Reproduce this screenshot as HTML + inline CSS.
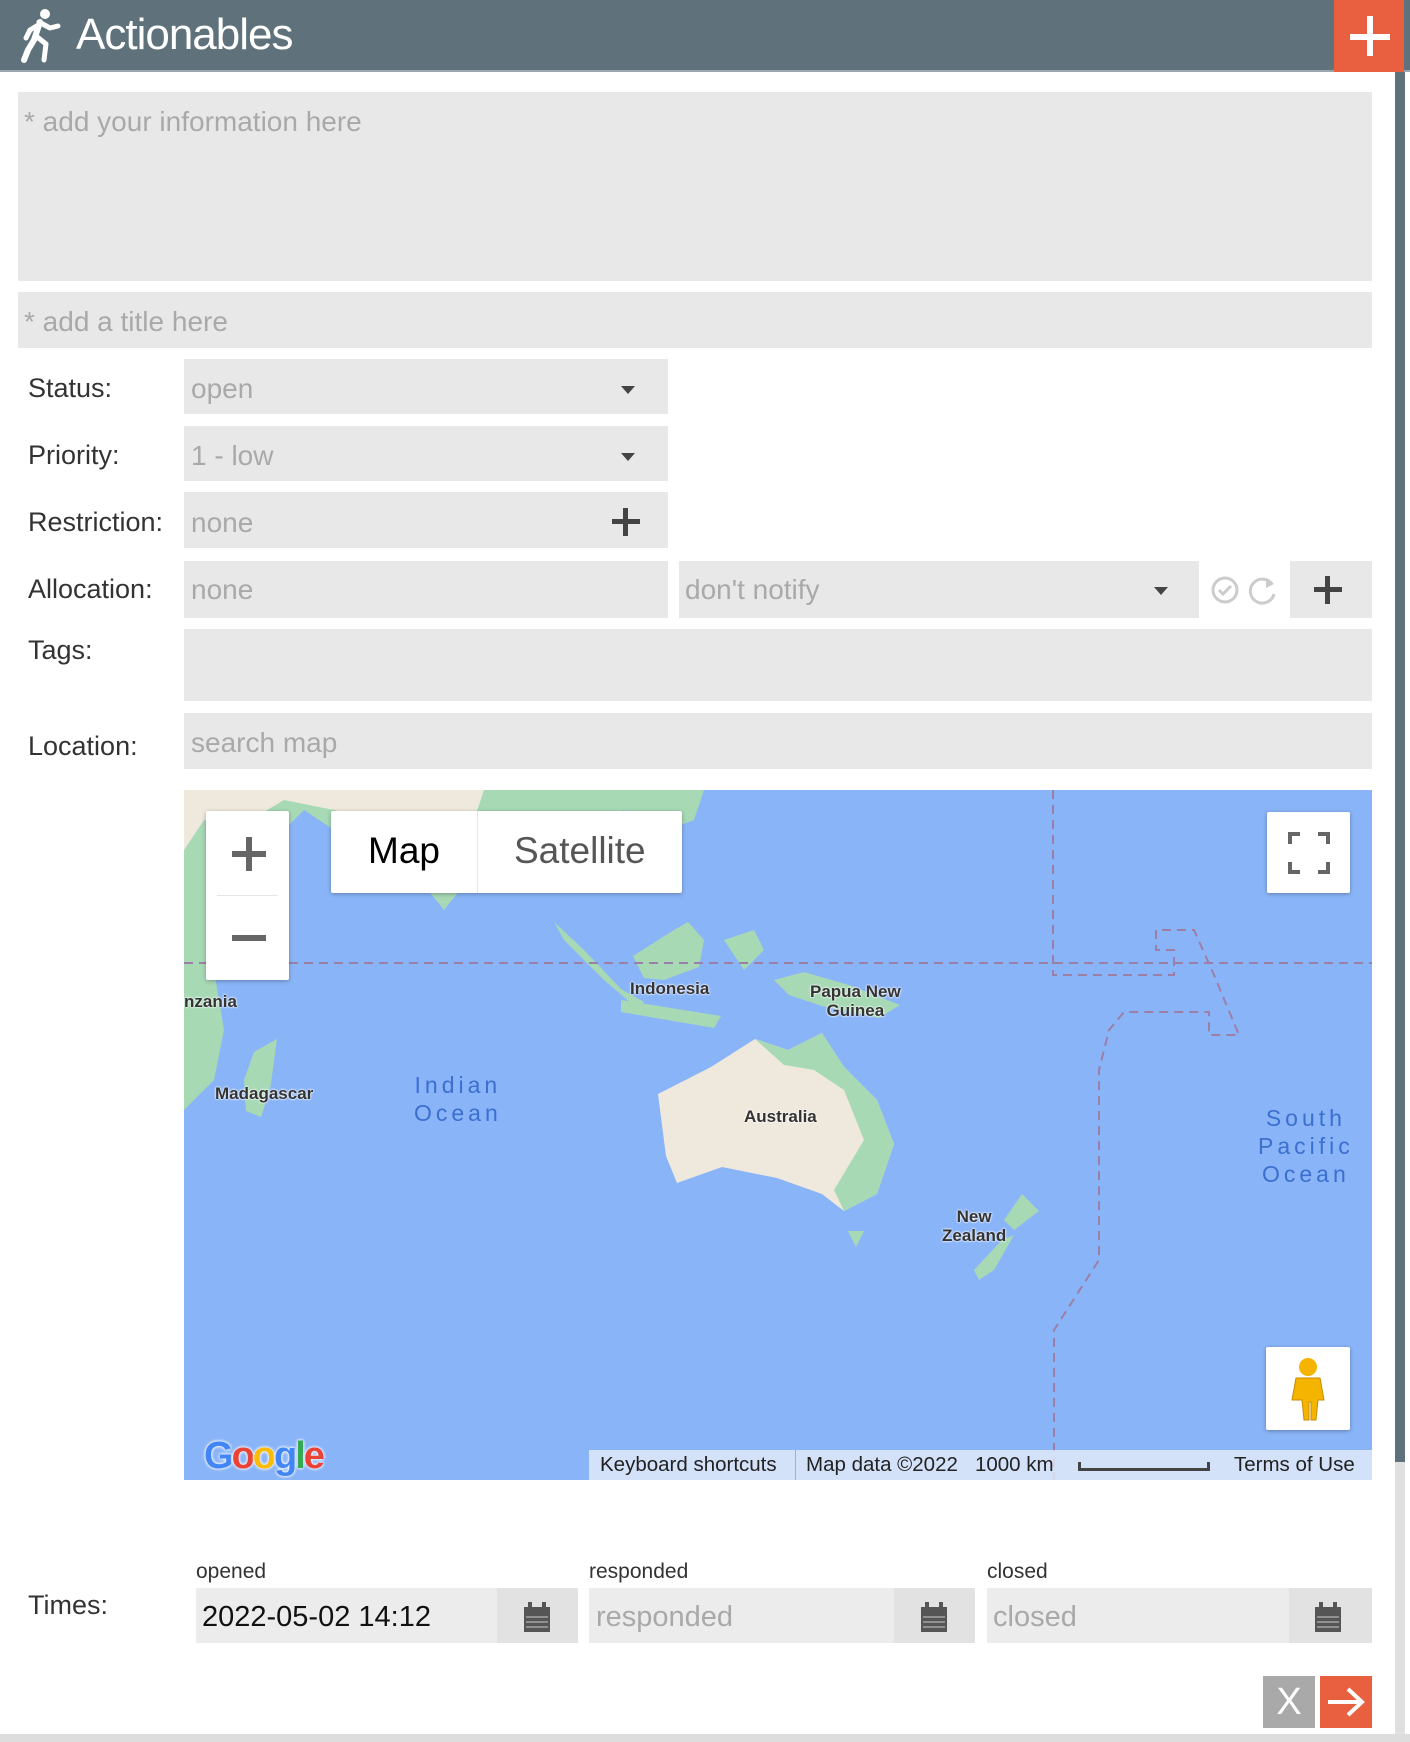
<!DOCTYPE html>
<html><head><meta charset="utf-8"><style>
*{box-sizing:border-box;margin:0;padding:0}
body{width:1410px;height:1742px;background:#fff;font-family:"Liberation Sans",Arial,sans-serif;position:relative;overflow:hidden}
.a{position:absolute}
.hdr{left:0;top:0;width:1410px;height:72px;background:#5f727b;border-bottom:2px solid #9aa6ad}
.f{background:#e8e8e8}
.ph{color:#a9a9a9;font-size:28px}
.lb{color:#333;font-size:27px;left:28px}
.arr{width:0;height:0;border-left:7px solid transparent;border-right:7px solid transparent;border-top:8px solid #444}
.ml{font-size:17px;font-weight:bold;color:#333;text-shadow:0 0 2px #fff,0 0 2px #fff;position:absolute;text-align:center;line-height:19px}
.oc{position:absolute;color:#3b6fd0;font-size:23px;letter-spacing:4px;line-height:28px;text-align:center}
</style></head><body>
<div class="a hdr"></div>
<svg class="a" style="left:20px;top:8px" width="46" height="56" viewBox="0 0 46 56"><g fill="#fff" stroke="#fff" stroke-linecap="round" stroke-linejoin="round"><circle cx="25" cy="6" r="5" stroke="none"/><path d="M20 14 L14 32 L8 42 L4 52" stroke-width="6" fill="none"/><path d="M19 14 L30 20 L38 18 M16 28 L26 36 L24 52 M20 16 L10 22 L6 30" stroke-width="5" fill="none"/></g></svg>
<div class="a" style="left:76px;top:10px;font-size:44px;color:#fff;letter-spacing:-1px">Actionables</div>
<div class="a" style="left:1334px;top:0;width:70px;height:72px;background:#e8603f"></div>
<div class="a" style="left:1350px;top:34px;width:40px;height:6px;background:#fff"></div>
<div class="a" style="left:1367px;top:16px;width:6px;height:40px;background:#fff"></div>
<div class="a" style="left:1395px;top:72px;width:10px;height:1390px;background:#5f727b"></div>
<div class="a" style="left:1395px;top:1462px;width:10px;height:272px;background:#e0e0e0"></div>
<div class="a" style="left:0;top:1734px;width:1410px;height:8px;background:#ddd"></div>

<div class="a f" style="left:18px;top:92px;width:1354px;height:189px"></div>
<div class="a ph" style="left:24px;top:106px">* add your information here</div>
<div class="a f" style="left:18px;top:292px;width:1354px;height:56px"></div>
<div class="a ph" style="left:24px;top:306px">* add a title here</div>

<div class="a lb" style="top:373px">Status:</div>
<div class="a f" style="left:184px;top:359px;width:484px;height:55px"></div>
<div class="a ph" style="left:191px;top:373px">open</div>
<div class="a arr" style="left:621px;top:386px"></div>

<div class="a lb" style="top:440px">Priority:</div>
<div class="a f" style="left:184px;top:426px;width:484px;height:55px"></div>
<div class="a ph" style="left:191px;top:440px">1 - low</div>
<div class="a arr" style="left:621px;top:453px"></div>

<div class="a lb" style="top:507px">Restriction:</div>
<div class="a f" style="left:184px;top:492px;width:484px;height:56px"></div>
<div class="a ph" style="left:191px;top:507px">none</div>
<div class="a" style="left:612px;top:519px;width:28px;height:5px;background:#444"></div>
<div class="a" style="left:623px;top:508px;width:5px;height:28px;background:#444"></div>

<div class="a lb" style="top:574px">Allocation:</div>
<div class="a f" style="left:184px;top:561px;width:484px;height:57px"></div>
<div class="a ph" style="left:191px;top:574px">none</div>
<div class="a f" style="left:679px;top:561px;width:520px;height:57px"></div>
<div class="a ph" style="left:685px;top:574px">don't notify</div>
<div class="a arr" style="left:1154px;top:587px"></div>
<svg class="a" style="left:1210px;top:574px" width="70" height="32"><circle cx="15" cy="16" r="12" fill="none" stroke="#ccc" stroke-width="3"/><path d="M9 16l4 4 8-8" fill="none" stroke="#ccc" stroke-width="3"/><path d="M62 10 A12 12 0 1 0 64 20" fill="none" stroke="#ccc" stroke-width="3"/><path d="M56 4 L64 10 L56 14" fill="#ccc"/></svg>
<div class="a f" style="left:1290px;top:561px;width:82px;height:57px"></div>
<div class="a" style="left:1314px;top:587px;width:28px;height:5px;background:#444"></div>
<div class="a" style="left:1325px;top:576px;width:5px;height:28px;background:#444"></div>

<div class="a lb" style="top:635px">Tags:</div>
<div class="a f" style="left:184px;top:629px;width:1188px;height:72px"></div>

<div class="a lb" style="top:731px">Location:</div>
<div class="a f" style="left:184px;top:713px;width:1188px;height:56px"></div>
<div class="a ph" style="left:191px;top:727px">search map</div>

<div class="a" style="left:184px;top:790px;width:1188px;height:690px;background:#8ab4f8;overflow:hidden">
<svg class="a" style="left:0;top:0" width="1188" height="690">
<path d="M0 0 L520 0 L510 30 L470 45 L440 20 L400 40 L360 30 L330 60 L300 45 L280 95 L260 120 L240 95 L210 70 L150 40 L120 20 L100 40 L60 60 L40 90 L30 180 L40 240 L30 290 L0 320 Z" fill="#a7d9b5"/>
<path d="M0 0 L300 0 L290 30 L230 40 L150 20 L100 10 L50 40 L20 30 L0 60 Z" fill="#efe9dd"/>
<path d="M93 249 L86 300 L77 327 L62 321 L60 290 L70 262 Z" fill="#a7d9b5"/>
<path d="M370 132 L400 160 L437 199 L460 212 L455 220 L420 190 L380 150 Z" fill="#a7d9b5"/>
<path d="M449 166 L490 140 L504 132 L520 150 L515 177 L480 190 L460 188 Z" fill="#a7d9b5"/>
<path d="M437 210 L537 226 L530 238 L437 222 Z" fill="#a7d9b5"/>
<path d="M540 150 L570 140 L580 160 L560 180 Z" fill="#a7d9b5"/>
<path d="M590 190 L620 182 L665 195 L716 215 L695 228 L638 216 L605 205 Z" fill="#a7d9b5"/>
<path d="M474 304 L527 277 L571 249 L604 260 L638 243 L660 277 L693 310 L710 354 L693 404 L660 421 L638 404 L593 388 L538 377 L493 393 L482 366 Z" fill="#efe9dd"/>
<path d="M571 249 L604 260 L638 243 L660 277 L693 310 L710 354 L693 404 L660 421 L650 400 L680 350 L660 300 L630 280 L600 275 Z" fill="#a7d9b5"/>
<path d="M664 441 L680 441 L672 457 Z" fill="#a7d9b5"/>
<path d="M838 404 L855 421 L830 440 L820 430 Z M818 450 L830 445 L810 480 L795 490 L790 480 Z" fill="#a7d9b5"/>
<g fill="none" stroke="#9c7fa6" stroke-width="2" stroke-dasharray="9,6">
<path d="M0 173 L1188 173"/>
<path d="M869 0 L869 185 L990 185 L990 160 L972 160 L972 140 L1010 140 L1030 185 L1055 245 L1025 245 L1025 222 L940 222 L925 240 L915 280 L915 470 L870 540 L870 690"/>
</g>
</svg>
<div class="ml" style="left:446px;top:189px">Indonesia</div>
<div class="ml" style="left:626px;top:192px">Papua New<br>Guinea</div>
<div class="ml" style="left:31px;top:294px">Madagascar</div>
<div class="ml" style="left:0;top:202px">nzania</div>
<div class="ml" style="left:560px;top:317px">Australia</div>
<div class="ml" style="left:758px;top:417px">New<br>Zealand</div>
<div class="oc" style="left:230px;top:281px">Indian<br>Ocean</div>
<div class="oc" style="left:1074px;top:314px">South<br>Pacific<br>Ocean</div>
<div class="a" style="left:22px;top:21px;width:83px;height:169px;background:#fff;border-radius:2px;box-shadow:0 1px 4px rgba(0,0,0,.3)"></div>
<div class="a" style="left:48px;top:61px;width:34px;height:6px;background:#666"></div>
<div class="a" style="left:62px;top:47px;width:6px;height:34px;background:#666"></div>
<div class="a" style="left:33px;top:105px;width:61px;height:1px;background:#e6e6e6"></div>
<div class="a" style="left:48px;top:145px;width:34px;height:6px;background:#666"></div>
<div class="a" style="left:147px;top:21px;width:351px;height:82px;background:#fff;border-radius:2px;box-shadow:0 1px 4px rgba(0,0,0,.3)"></div>
<div class="a" style="left:293px;top:21px;width:1px;height:82px;background:#e6e6e6"></div>
<div class="a" style="left:184px;top:40px;font-size:37px;color:#000">Map</div>
<div class="a" style="left:330px;top:40px;font-size:37px;color:#565656">Satellite</div>
<div class="a" style="left:1083px;top:22px;width:83px;height:81px;background:#fff;border-radius:2px;box-shadow:0 1px 4px rgba(0,0,0,.3)"></div>
<svg class="a" style="left:1104px;top:42px" width="42" height="42" fill="none" stroke="#666" stroke-width="4"><path d="M2 12V2h10M30 2h10v10M40 30v10H30M12 40H2V30"/></svg>
<div class="a" style="left:1082px;top:557px;width:84px;height:83px;background:#fff;border-radius:2px;box-shadow:0 1px 4px rgba(0,0,0,.3)"></div>
<svg class="a" style="left:1104px;top:566px" width="40" height="66"><circle cx="20" cy="11" r="9" fill="#f4b400"/><path d="M8 22h24l4 22h-6l-2 20h-5v-18h-2v18h-5l-2-20H4z" fill="#f4b400" stroke="#c98b00" stroke-width="1"/></svg>
<div class="a" style="left:20px;top:645px;font-size:38px;font-weight:bold;letter-spacing:-2px;text-shadow:0 0 3px #fff,0 0 3px #fff"><span style="color:#4285f4">G</span><span style="color:#ea4335">o</span><span style="color:#fbbc05">o</span><span style="color:#4285f4">g</span><span style="color:#34a853">l</span><span style="color:#ea4335">e</span></div>
<div class="a" style="left:405px;top:660px;width:783px;height:30px;background:rgba(235,240,250,.75)"></div>
<div class="a" style="left:416px;top:663px;font-size:20.5px;color:#222;white-space:nowrap">Keyboard shortcuts</div>
<div class="a" style="left:611px;top:660px;width:1px;height:30px;background:#aac"></div>
<div class="a" style="left:622px;top:663px;font-size:20.5px;color:#222;white-space:nowrap">Map data ©2022&nbsp;&nbsp;&nbsp;1000 km</div>
<div class="a" style="left:894px;top:672px;width:132px;height:9px;border:3px solid #444;border-top:none"></div>
<div class="a" style="left:1050px;top:663px;font-size:20.5px;color:#222;white-space:nowrap">Terms of Use</div>
</div>

<div class="a" style="left:196px;top:1560px;font-size:21px;color:#333">opened</div>
<div class="a" style="left:589px;top:1560px;font-size:21px;color:#333">responded</div>
<div class="a" style="left:987px;top:1560px;font-size:21px;color:#333">closed</div>
<div class="a lb" style="top:1590px">Times:</div>
<div class="a" style="left:196px;top:1588px;width:382px;height:55px;background:#ececec"></div>
<div class="a" style="left:497px;top:1588px;width:81px;height:55px;background:#e2e2e2"></div>
<div class="a" style="left:202px;top:1601px;font-size:29px;color:#111">2022-05-02 14:12</div>
<div class="a" style="left:589px;top:1588px;width:386px;height:55px;background:#ececec"></div>
<div class="a" style="left:894px;top:1588px;width:81px;height:55px;background:#e2e2e2"></div>
<div class="a ph" style="left:596px;top:1601px;font-size:29px">responded</div>
<div class="a" style="left:987px;top:1588px;width:385px;height:55px;background:#ececec"></div>
<div class="a" style="left:1289px;top:1588px;width:83px;height:55px;background:#e2e2e2"></div>
<div class="a ph" style="left:993px;top:1601px;font-size:29px">closed</div>
<svg class="a" style="left:523px;top:1602px" width="28" height="30"><rect x="1" y="5" width="26" height="25" fill="#555"/><rect x="5" y="0" width="4" height="7" fill="#555"/><rect x="19" y="0" width="4" height="7" fill="#555"/><path d="M3 15h22M3 20h22M3 25h22" stroke="#ccc" stroke-width="1"/></svg>
<svg class="a" style="left:920px;top:1602px" width="28" height="30"><rect x="1" y="5" width="26" height="25" fill="#555"/><rect x="5" y="0" width="4" height="7" fill="#555"/><rect x="19" y="0" width="4" height="7" fill="#555"/><path d="M3 15h22M3 20h22M3 25h22" stroke="#ccc" stroke-width="1"/></svg>
<svg class="a" style="left:1314px;top:1602px" width="28" height="30"><rect x="1" y="5" width="26" height="25" fill="#555"/><rect x="5" y="0" width="4" height="7" fill="#555"/><rect x="19" y="0" width="4" height="7" fill="#555"/><path d="M3 15h22M3 20h22M3 25h22" stroke="#ccc" stroke-width="1"/></svg>

<div class="a" style="left:1263px;top:1676px;width:52px;height:52px;background:#a9a9a9;color:#fff;font-size:38px;text-align:center;line-height:52px">X</div>
<div class="a" style="left:1320px;top:1676px;width:52px;height:52px;background:#e8603f"></div>
<svg class="a" style="left:1324px;top:1684px" width="44" height="36" fill="none" stroke="#fff" stroke-width="4"><path d="M4 18h34M24 5l14 13-14 13"/></svg>
</body></html>
